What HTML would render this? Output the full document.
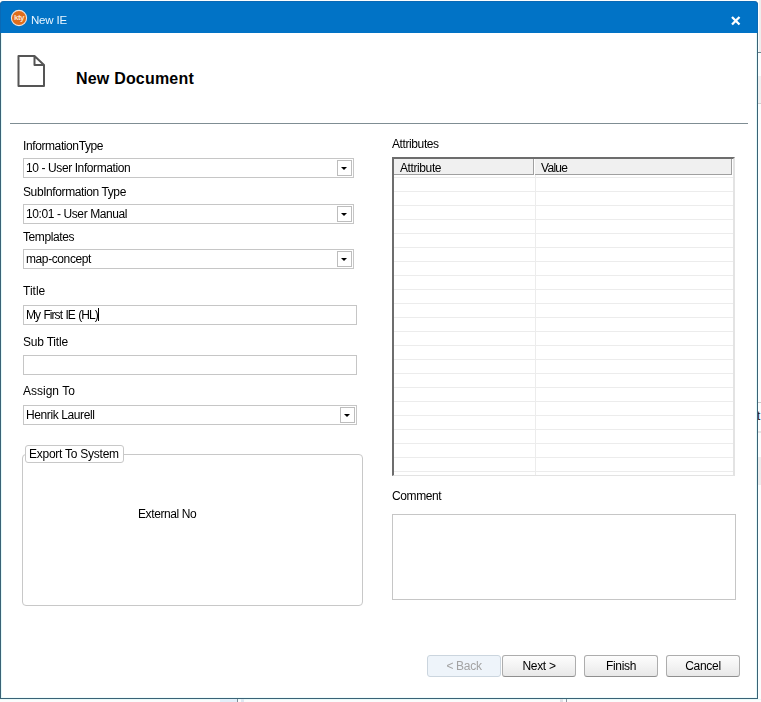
<!DOCTYPE html>
<html><head><meta charset="utf-8">
<style>
*{box-sizing:border-box;margin:0;padding:0}
html,body{width:761px;height:702px;overflow:hidden;background:#fbfdfd}
body{position:relative;font-family:"Liberation Sans",sans-serif;color:#000}.t,.bt{will-change:transform}
.abs{position:absolute}
.t{position:absolute;font-size:12px;letter-spacing:-0.4px;white-space:nowrap;line-height:14px}
#win{position:absolute;left:0;top:1px;width:758px;height:698px;background:#fff;border:1px solid #3a6276;box-shadow:inset 1px 0 0 #e4fafa,inset -1px 0 0 #e4fafa,inset 0 -1px 0 #effcfc;border-top:none;border-radius:4px 4px 0 0;overflow:hidden}
#title{position:absolute;left:0;top:1px;width:758px;height:32px;background:#0173c6;border:1px solid #0a69b5;border-bottom:none;border-radius:4px 4px 0 0}
.combo{position:absolute;height:20px;border:1px solid #c6c6c6;background:#fff}
.combo .btn{position:absolute;right:1px;top:1px;width:15px;height:16px;border:1px solid #bdbdbd;background:#fff}
.combo .btn:after{content:"";position:absolute;left:3px;top:6px;border-left:3px solid transparent;border-right:3px solid transparent;border-top:3.5px solid #000}
.tb{position:absolute;height:20px;border:1px solid #c6c6c6;background:#fff}
.bt{position:absolute;top:655px;width:74px;height:22px;border:1px solid #adadad;border-bottom-color:#8f8f8f;border-radius:3px;background:linear-gradient(#fdfdfd,#f3f3f3 50%,#e8e8e8);font-size:12px;letter-spacing:-0.3px;text-align:center;line-height:20px}
</style></head><body>
<!-- outside strips -->
<div class="abs" style="left:0;top:699px;width:761px;height:1px;background:#e9f9f9"></div>
<div class="abs" style="left:759px;top:0;width:2px;height:52px;background:#eeeeee"></div>
<div class="abs" style="left:758px;top:52px;width:3px;height:1px;background:#6f8790"></div>
<div class="abs" style="left:758px;top:76px;width:3px;height:27px;background:#f0f0f0"></div>
<div class="abs" style="left:758px;top:103px;width:3px;height:1px;background:#d0d0d0"></div>
<div class="abs" style="left:758px;top:402px;width:3px;height:1px;background:#c8c8c8"></div>
<div class="abs" style="left:757px;top:409px;font-size:12px;line-height:14px;color:#222">t</div>
<div class="abs" style="left:758px;top:431px;width:3px;height:2px;background:#e4e4e4"></div>
<div class="abs" style="left:758px;top:457px;width:3px;height:28px;background:#ededed"></div>
<div class="abs" style="left:220px;top:699px;width:17px;height:3px;background:#e3f0fa"></div>
<div class="abs" style="left:237px;top:699px;width:1px;height:3px;background:#7d8f99"></div>
<div class="abs" style="left:241px;top:699px;width:3px;height:3px;background:#dde8f2"></div>
<div class="abs" style="left:560px;top:699px;width:3px;height:3px;background:#dfe3e8"></div>
<div class="abs" style="left:566px;top:699px;width:1px;height:3px;background:#8a98a2"></div>
<div id="win"></div>
<div id="title"></div>
<!-- title icon -->
<svg class="abs" style="left:10px;top:9px" width="18" height="18" viewBox="0 0 18 18"><circle cx="9" cy="9" r="7.6" fill="#df6d1c" stroke="#f1e4dc" stroke-width="1.1"/></svg>
<div class="abs" style="left:12px;top:13px;width:14px;text-align:center;font-size:8px;font-weight:bold;color:#fbe3cf;letter-spacing:-0.6px;line-height:10px">kty</div>
<div class="t" style="left:31px;top:13px;color:#eaf6ff;font-size:11.5px;letter-spacing:-0.2px">New IE</div>
<svg class="abs" style="left:729px;top:14px" width="13" height="13" viewBox="0 0 13 13"><path d="M3 3L10.5 10.5M10.5 3L3 10.5" stroke="#fff" stroke-width="2.3"/></svg>

<!-- header -->
<svg class="abs" style="left:16px;top:54px" width="32" height="34" viewBox="0 0 32 34"><path d="M2.5 2H18.5L28 11V32H2.5Z M18.5 2V11H28" fill="none" stroke="#555" stroke-width="2" stroke-linejoin="round"/></svg>
<div class="abs" style="left:76px;top:69px;font-size:16px;font-weight:bold;white-space:nowrap;line-height:19px;letter-spacing:0.2px">New Document</div>
<div class="abs" style="left:10px;top:123px;width:738px;height:1px;background:#7f8d93"></div>

<!-- left form -->
<div class="t" style="left:23px;top:139px">InformationType</div>
<div class="combo" style="left:23px;top:158px;width:331px"><div class="btn"></div></div>
<div class="t" style="left:26px;top:161px">10 - User Information</div>

<div class="t" style="left:23px;top:185px">SubInformation Type</div>
<div class="combo" style="left:23px;top:204px;width:331px"><div class="btn"></div></div>
<div class="t" style="left:26px;top:207px">10:01 - User Manual</div>

<div class="t" style="left:23px;top:230px">Templates</div>
<div class="combo" style="left:23px;top:249px;width:331px"><div class="btn"></div></div>
<div class="t" style="left:26px;top:252px">map-concept</div>

<div class="t" style="left:23px;top:284px;letter-spacing:0">Title</div>
<div class="tb" style="left:23px;top:305px;width:334px"></div>
<div class="t" style="left:26px;top:308px;letter-spacing:-0.95px;word-spacing:1px">My First IE (HL)</div>
<div class="abs" style="left:98px;top:308px;width:1px;height:13px;background:#000"></div>

<div class="t" style="left:23px;top:335px;letter-spacing:-0.2px">Sub Title</div>
<div class="tb" style="left:23px;top:355px;width:334px"></div>

<div class="t" style="left:23px;top:384px;letter-spacing:0">Assign To</div>
<div class="combo" style="left:23px;top:405px;width:334px"><div class="btn"></div></div>
<div class="t" style="left:26px;top:408px">Henrik Laurell</div>

<div class="abs" style="left:22px;top:454px;width:341px;height:152px;border:1px solid #c8c8c8;border-radius:4px"></div>
<div class="abs" style="left:25px;top:445px;width:99px;height:18px;border:1px solid #c8c8c8;border-radius:3px;background:#fff"></div>
<div class="t" style="left:29px;top:447px;letter-spacing:-0.25px">Export To System</div>
<div class="t" style="left:138px;top:507px">External No</div>

<!-- right -->
<div class="t" style="left:392px;top:137px">Attributes</div>
<div class="abs" id="grid" style="left:392px;top:157px;width:343px;height:319px;border-top:2px solid #6d6d6d;border-left:2px solid #6d6d6d;border-right:2px solid #e3e3e3;border-bottom:1px solid #e3e3e3;background:#fff"></div>
<div class="abs" style="left:394px;top:159px;width:140px;height:16px;background:#f0f0f0;border-right:1px solid #a0a0a0;border-bottom:1px solid #a0a0a0"></div>
<div class="abs" style="left:535px;top:159px;width:197px;height:16px;background:#f0f0f0;border-right:1px solid #a0a0a0;border-bottom:1px solid #a0a0a0"></div>
<div class="t" style="left:400px;top:161px">Attribute</div>
<div class="t" style="left:541px;top:161px;letter-spacing:-0.7px">Value</div>
<div class="abs" style="left:394px;top:177px;width:339px;height:1px;background:#ececec"></div><div class="abs" style="left:394px;top:191px;width:339px;height:1px;background:#ececec"></div><div class="abs" style="left:394px;top:205px;width:339px;height:1px;background:#ececec"></div><div class="abs" style="left:394px;top:219px;width:339px;height:1px;background:#ececec"></div><div class="abs" style="left:394px;top:233px;width:339px;height:1px;background:#ececec"></div><div class="abs" style="left:394px;top:247px;width:339px;height:1px;background:#ececec"></div><div class="abs" style="left:394px;top:261px;width:339px;height:1px;background:#ececec"></div><div class="abs" style="left:394px;top:275px;width:339px;height:1px;background:#ececec"></div><div class="abs" style="left:394px;top:289px;width:339px;height:1px;background:#ececec"></div><div class="abs" style="left:394px;top:303px;width:339px;height:1px;background:#ececec"></div><div class="abs" style="left:394px;top:317px;width:339px;height:1px;background:#ececec"></div><div class="abs" style="left:394px;top:331px;width:339px;height:1px;background:#ececec"></div><div class="abs" style="left:394px;top:345px;width:339px;height:1px;background:#ececec"></div><div class="abs" style="left:394px;top:359px;width:339px;height:1px;background:#ececec"></div><div class="abs" style="left:394px;top:373px;width:339px;height:1px;background:#ececec"></div><div class="abs" style="left:394px;top:387px;width:339px;height:1px;background:#ececec"></div><div class="abs" style="left:394px;top:401px;width:339px;height:1px;background:#ececec"></div><div class="abs" style="left:394px;top:415px;width:339px;height:1px;background:#ececec"></div><div class="abs" style="left:394px;top:429px;width:339px;height:1px;background:#ececec"></div><div class="abs" style="left:394px;top:443px;width:339px;height:1px;background:#ececec"></div><div class="abs" style="left:394px;top:457px;width:339px;height:1px;background:#ececec"></div><div class="abs" style="left:394px;top:471px;width:339px;height:1px;background:#ececec"></div><div class="abs" style="left:535px;top:175px;width:1px;height:300px;background:#ececec"></div>

<div class="t" style="left:392px;top:489px">Comment</div>
<div class="tb" style="left:392px;top:514px;width:344px;height:86px"></div>

<!-- buttons -->
<div class="bt" style="left:427px;border-color:#cbd5de;background:#eef4fa;color:#a3a3a3">&lt; Back</div>
<div class="bt" style="left:502px">Next &gt;</div>
<div class="bt" style="left:584px">Finish</div>
<div class="bt" style="left:666px">Cancel</div>
</body></html>
